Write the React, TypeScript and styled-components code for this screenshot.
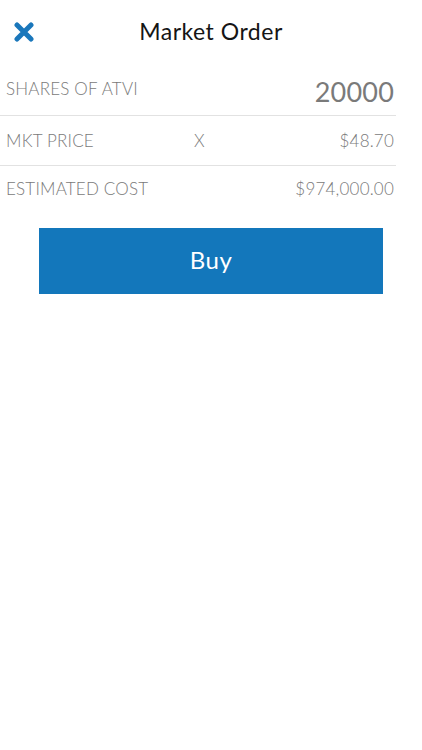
import styled, { createGlobalStyle } from 'styled-components';

const GlobalStyle = createGlobalStyle`
  html, body {
    margin: 0;
    padding: 0;
    background: #fff;
  }
  body {
    font-family: Lato, 'Open Sans', sans-serif;
  }
`;

type Row = {
  label: string;
  middle?: string;
  value: string;
  big?: boolean;
};

const rows: Row[] = [
  { label: 'SHARES OF ATVI', value: '20000', big: true },
  { label: 'MKT PRICE', middle: 'X', value: '$48.70' },
  { label: 'ESTIMATED COST', value: '$974,000.00' },
];

function CloseIcon() {
  return (
    <svg width='22' height='20' viewBox='0 0 22 20'>
      <path
        d='M4 3 L18 17 M18 3 L4 17'
        stroke='#1a77bb'
        strokeWidth='5'
        strokeLinecap='round'
        fill='none'
      />
    </svg>
  );
}

function App() {
  return (
    <Page>
      <GlobalStyle />
      <Header>
        <CloseButton aria-label='close'>
          <CloseIcon />
        </CloseButton>
        <Title>Market Order</Title>
      </Header>
      <List>
        {rows.map((row) => (
          <OrderRow key={row.label}>
            <Label>{row.label}</Label>
            <Middle>{row.middle}</Middle>
            <Value $big={row.big}>{row.value}</Value>
          </OrderRow>
        ))}
      </List>
      <ButtonWrap>
        <BuyButton>Buy</BuyButton>
      </ButtonWrap>
    </Page>
  );
}

const Page = styled.div`
  width: 422px;
  min-height: 750px;
  background: #fff;
`;

const Header = styled.div`
  position: relative;
  height: 62px;
  display: flex;
  align-items: center;
  justify-content: center;
`;

const CloseButton = styled.button`
  position: absolute;
  left: 13px;
  top: 22px;
  padding: 0;
  border: 0;
  background: none;
  display: flex;
`;

const Title = styled.h1`
  margin: 0 0 1px 0;
  font-size: 23px;
  font-weight: 400;
  color: #151515;
  letter-spacing: 0.5px;
`;

const List = styled.div`
  width: 396px;
`;

const OrderRow = styled.div`
  display: grid;
  grid-template-columns: 188px 1fr auto;
  align-items: center;
  height: 50px;
  padding-left: 6px;
  padding-right: 2px;
  box-sizing: border-box;
  border-bottom: 1px solid #e2e2e2;

  &:first-child {
    height: 54px;
  }
  &:last-child {
    border-bottom: 0;
    height: 44px;
  }
`;

const Label = styled.span`
  font-size: 17px;
  font-weight: 300;
  color: #7a7a7a;
  letter-spacing: 0.2px;
`;

const Middle = styled.span`
  font-size: 17px;
  font-weight: 300;
  color: #7a7a7a;
`;

const Value = styled.span<{ $big?: boolean }>`
  font-size: ${({ $big }) => ($big ? '27px' : '17px')};
  font-weight: ${({ $big }) => ($big ? 400 : 300)};
  color: #7a7a7a;
  text-align: right;
  letter-spacing: 0.2px;
  margin-top: ${({ $big }) => ($big ? '5px' : '0')};
`;

const ButtonWrap = styled.div`
  display: flex;
  justify-content: center;
  padding-top: 18px;
`;

const BuyButton = styled.button`
  width: 344px;
  height: 66px;
  border: 0;
  border-radius: 0;
  background: #1377bb;
  color: #fff;
  font-family: Lato, 'Open Sans', sans-serif;
  font-size: 24px;
  font-weight: 400;
  letter-spacing: 0.5px;
  padding: 0 0 3px 0;
`;

export default App;
